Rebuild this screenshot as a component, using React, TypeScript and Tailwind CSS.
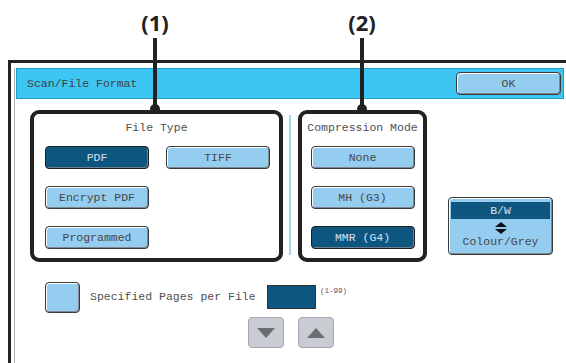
import clsx from "clsx";

const mono = "font-mono font-normal";

function Btn({ label, active }: { label: string; active?: boolean }) {
  return (
    <div
      className={clsx(
        "flex h-[23px] w-[104px] items-center justify-center rounded-[4px] border text-[11.5px]",
        mono,
        active
          ? "border-[#1e1e1e] bg-[#0e5580] text-[#d5e2ec] shadow-[inset_-1px_-1px_0_#6d7f8c]"
          : "border-[#3a3a3a] bg-[#95cdf0] text-[#474747] shadow-[inset_1px_1px_0_#ffffff,inset_-1px_-1px_0_#7f8a90]"
      )}
    >
      {label}
    </div>
  );
}

function Callout({ label, x }: { label: string; x: number }) {
  return (
    <div className="absolute top-0 flex flex-col items-center" style={{ left: x - 20, width: 40 }}>
      <div className="mt-[9px] h-[26px] font-sans text-[22px] font-bold leading-[26px] text-[#222]">
        {label}
      </div>
      <div className="mt-[3px] h-[70px] w-[4px] bg-[#222]" />
      <div className="-mt-[4px] h-[10px] w-[10px] rounded-full bg-[#222]" />
    </div>
  );
}

export default function App() {
  return (
    <div className="relative h-[363px] w-[566px] overflow-hidden bg-white font-mono">
      {/* outer window frame */}
      <div className="ml-[8px] mt-[60px] h-[320px] w-[600px] border-[3px] border-[#232323] bg-white">
        <div className="ml-[3px] h-full border-l border-[#b5b5b5] pl-[1px]">
          {/* title bar */}
          <div className="mt-[5px] flex h-[31px] w-[548px] items-center justify-between border border-[#1f9bcf] bg-[#3ec6f2] pl-[10px] pr-[2px]">
            <span className={clsx(mono, "text-[11.5px] text-[#404040]")}>Scan/File Format</span>
            <div
              className={clsx(
                mono,
                "flex h-[23px] w-[105px] items-center justify-center rounded-[4px] border border-[#3a3a3a] bg-[#95cdf0] text-[11.5px] text-[#474747] shadow-[inset_1px_1px_0_#ffffff,inset_-1px_-1px_0_#7f8a90]"
              )}
            >
              OK
            </div>
          </div>

          {/* option groups */}
          <div className="ml-[14px] mt-[11px] flex items-start">
            <div className="h-[152px] w-[253px] rounded-[9px] border-[4px] border-[#222] pl-[11px]">
              <div className={clsx(mono, "mt-[7px] h-[14px] pr-[11px] text-center text-[11.5px] leading-[14px] text-[#505050]")}>
                File Type
              </div>
              <div className="mt-[11px] grid grid-cols-[104px_104px] gap-x-[17px] gap-y-[17px]">
                <Btn label="PDF" active />
                <Btn label="TIFF" />
                <Btn label="Encrypt PDF" />
                <div />
                <Btn label="Programmed" />
              </div>
            </div>

            <div className="ml-[6px] mt-[5px] h-[140px] w-[2px] bg-[#9fd3f0]" />

            <div className="ml-[7px] flex h-[152px] w-[129px] flex-col items-center rounded-[9px] border-[4px] border-[#222]">
              <div className={clsx(mono, "mt-[7px] h-[14px] whitespace-nowrap text-center text-[11.5px] leading-[14px] text-[#505050]")}>
                Compression Mode
              </div>
              <div className="mt-[11px] flex flex-col gap-[17px]">
                <Btn label="None" />
                <Btn label="MH (G3)" />
                <Btn label="MMR (G4)" active />
              </div>
            </div>

            <div className="ml-[21px] mt-[87px] flex h-[58px] w-[105px] flex-col items-center rounded-[4px] border border-[#3a3a3a] bg-[#95cdf0] px-[2px] pt-[4px] shadow-[inset_1px_1px_0_#ffffff,inset_-1px_-1px_0_#7f8a90]">
              <div className={clsx(mono, "flex h-[17px] w-full items-center justify-center bg-[#0e5580] text-[11.5px] text-[#d5e2ec]")}>
                B/W
              </div>
              <svg className="mt-[3px]" width="12" height="12" viewBox="0 0 12 12">
                <polygon points="6,0 12,5 0,5" fill="#111" />
                <polygon points="0,7 12,7 6,12" fill="#111" />
              </svg>
              <div className={clsx(mono, "mt-[1px] text-[11.5px] leading-[14px] text-[#474747]")}>Colour/Grey</div>
            </div>
          </div>

          {/* pages per file */}
          <div className="ml-[29px] mt-[20px] flex items-start">
            <div className="h-[31px] w-[35px] rounded-[4px] border border-[#3a3a3a] bg-[#95cdf0] shadow-[inset_1px_1px_0_#ffffff,inset_-1px_-1px_0_#7f8a90]" />
            <div className={clsx(mono, "ml-[10px] mt-[8px] w-[177px] whitespace-nowrap text-[11.5px] leading-[14px] text-[#505050]")}>
              Specified Pages per File
            </div>
            <div className="mt-[3px] h-[24px] w-[49px] border border-[#333] bg-[#0e5580]" />
            <div className={clsx(mono, "ml-[4px] mt-[4px] text-[7.5px] text-[#555]")}>(1-99)</div>
          </div>
          <div className="ml-[232px] mt-[4px] flex gap-[14px]">
            <div className="flex h-[31px] w-[36px] items-center justify-center rounded-[4px] border border-[#a4a8ad] bg-[#c9cdd3]">
              <svg width="18" height="10" viewBox="0 0 18 10">
                <polygon points="0,0 18,0 9,10" fill="#6b6f73" />
              </svg>
            </div>
            <div className="flex h-[31px] w-[36px] items-center justify-center rounded-[4px] border border-[#a4a8ad] bg-[#c9cdd3]">
              <svg width="18" height="10" viewBox="0 0 18 10">
                <polygon points="9,0 18,10 0,10" fill="#6b6f73" />
              </svg>
            </div>
          </div>
        </div>
      </div>

      <Callout label="(1)" x={155} />
      <Callout label="(2)" x={362} />
    </div>
  );
}
